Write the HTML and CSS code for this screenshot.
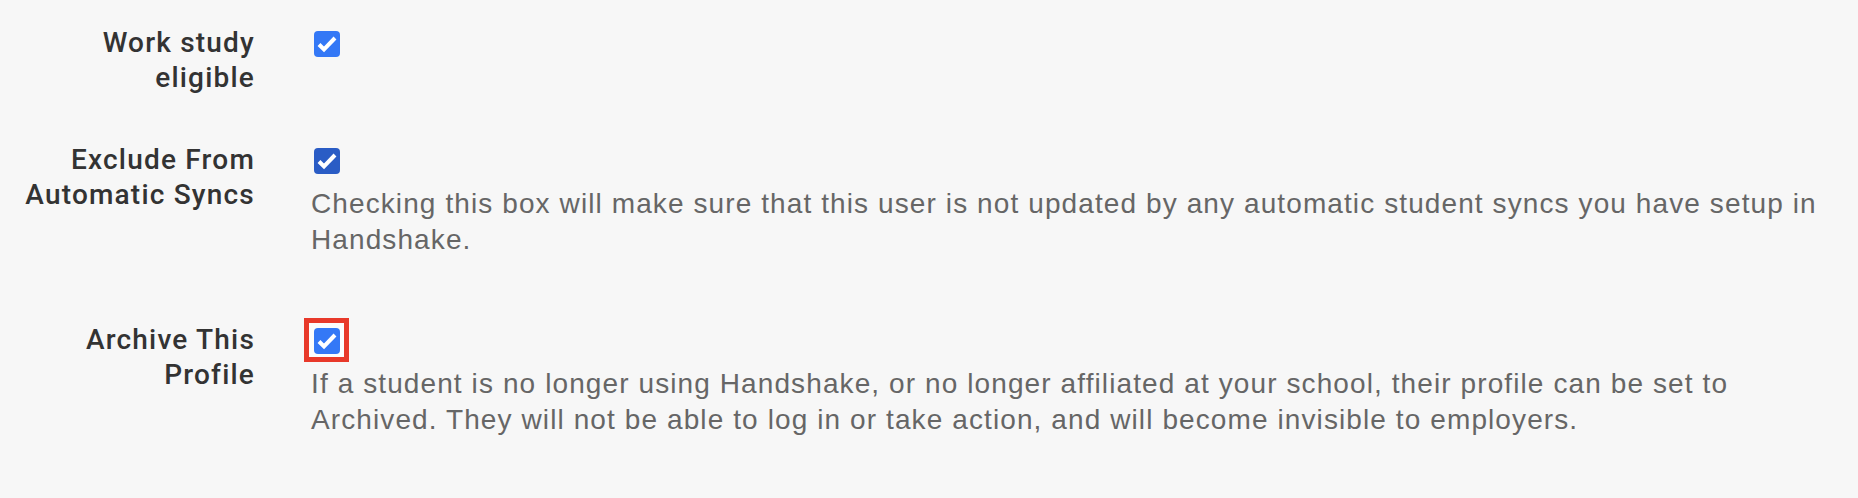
FILE: index.html
```html
<!DOCTYPE html>
<html lang="en">
<head>
    <meta charset="UTF-8">
    <meta name="viewport" content="width=device-width, initial-scale=1.0">
    <title>Student Settings</title>
    <link rel="stylesheet" href="styles.css">
</head>
<body>

    <div class="settings">
        <div class="row">
            <div class="label">Work study eligible</div>
            <div class="field">
                <span class="check">
                    <svg viewBox="0 0 26 26" width="26" height="26"><polyline points="5,13.5 10,18.5 21,7" /></svg>
                </span>
            </div>
        </div>

        <div class="row">
            <div class="label">Exclude From Automatic Syncs</div>
            <div class="field">
                <span class="check check-dark">
                    <svg viewBox="0 0 26 26" width="26" height="26"><polyline points="5,13.5 10,18.5 21,7" /></svg>
                </span>
                <p class="hint">Checking this box will make sure that this user is not updated by any automatic student syncs you have setup in Handshake.</p>
            </div>
        </div>

        <div class="row">
            <div class="label">Archive This Profile</div>
            <div class="field">
                <span class="check highlighted">
                    <svg viewBox="0 0 26 26" width="26" height="26"><polyline points="5,13.5 10,18.5 21,7" /></svg>
                </span>
                <p class="hint">If a student is no longer using Handshake, or no longer affiliated at your school, their profile can be set to Archived. They will not be able to log in or take action, and will become invisible to employers.</p>
            </div>
        </div>
    </div>

</body>
</html>
```

FILE: styles.css
```css
body {
    margin: 0;
    background-color: #f7f7f7;
    font-family: "Liberation Sans", Arial, sans-serif;
}
.settings {
    padding: 25px 22px 0 0;
}
.row {
    display: flex;
    margin-bottom: 47px;
}
.label {
    width: 255px;
    flex-shrink: 0;
    text-align: right;
    font-size: 28px;
    line-height: 35px;
    letter-spacing: 1.2px;
    color: #333;
    font-family: Roboto, "Liberation Sans", sans-serif;
    font-weight: 500;
}
.field {
    margin-left: 56px;
    flex: 1;
}
.check {
    display: block;
    width: 26px;
    height: 26px;
    margin: 6px 0 0 3px;
    border-radius: 4px;
    background-color: #3478f6;
}
.check-dark {
    background-color: #2a5cc5;
}
.check svg {
    display: block;
    fill: none;
    stroke: #fff;
    stroke-width: 4;
}
/* red annotation box round the archive checkbox */
.highlighted {
    position: relative;
}
.highlighted::before {
    content: "";
    position: absolute;
    left: -10px;
    top: -10px;
    width: 45px;
    height: 44px;
    box-sizing: border-box;
    border: 5px solid #e8392a;
    background-color: #fcfcfc;
    z-index: -1;
}
.hint {
    margin: 12px 0 17px 0;
    font-size: 28px;
    line-height: 36px;
    letter-spacing: 1.1px;
    color: #666;
}
```
